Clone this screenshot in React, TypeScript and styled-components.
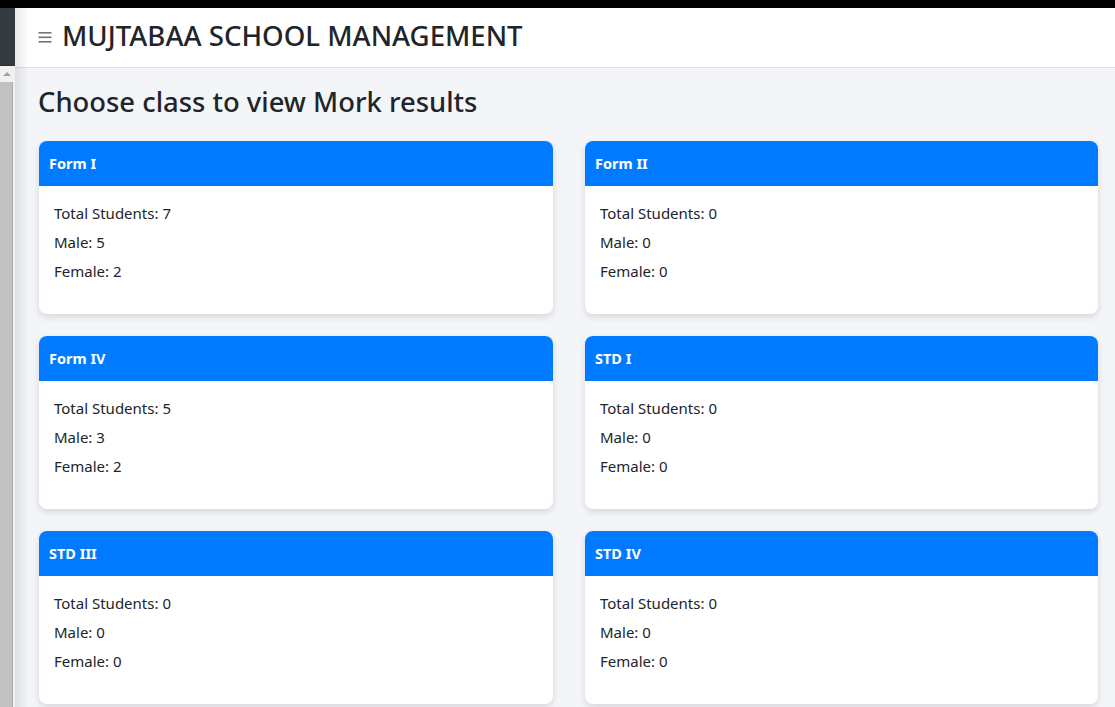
import React from "react";
import styled, { createGlobalStyle } from "styled-components";

const GlobalStyle = createGlobalStyle`
  * { box-sizing: border-box; }
  html, body { margin: 0; padding: 0; background: #000; }
  body { font-family: "Noto Sans", "Open Sans", sans-serif; color: #212529; overflow: hidden; }
`;

const Screen = styled.div`
  padding-top: 8px;
  background: #000;
  height: 707px;
`;

const Layout = styled.div`
  display: flex;
  height: 699px;
  background: #f4f5f9;
`;

const Strip = styled.div`
  width: 15px;
  flex: none;
  display: flex;
  flex-direction: column;
  background: #f1f1f1;
`;

const StripTop = styled.div`
  height: 58px;
  background: #343a40;
  border-bottom: 1px solid #2b3035;
`;

const ScrollArrow = styled.div`
  height: 16px;
  display: flex;
  align-items: center;
  justify-content: center;
  padding-right: 2px;
  &::before {
    content: "";
    border-left: 4px solid transparent;
    border-right: 4px solid transparent;
    border-bottom: 4px solid #a3a3a3;
  }
`;

const ScrollTrack = styled.div`
  flex: 1;
  margin-right: 2px;
  background: #c1c1c1;
  border-right: 1px solid #a9a9a9;
`;

const Main = styled.div`
  flex: 1;
  display: flex;
  flex-direction: column;
  position: relative;
  &::after {
    content: "";
    position: absolute;
    left: 0;
    top: 0;
    bottom: 0;
    width: 14px;
    background: linear-gradient(to right, rgba(0,0,0,0.09), rgba(0,0,0,0));
    pointer-events: none;
  }
`;

const Header = styled.header`
  height: 60px;
  flex: none;
  background: #fff;
  border-bottom: 1px solid #dee2e6;
  display: flex;
  align-items: center;
  padding: 0 0 5px 23px;
  gap: 9px;
`;

const Burger = styled.svg`
  width: 15px;
  height: 14px;
  margin-top: 3px;
`;

const Brand = styled.h1`
  margin: 0;
  font-size: 27.6px;
  font-weight: 500;
  color: #212529;
`;

const Content = styled.main`
  padding: 15px 17px 0 23px;
`;

const PageTitle = styled.h2`
  margin: 0 0 20px;
  font-size: 27.4px;
  font-weight: 500;
  line-height: 38px;
  color: #212529;
`;

const Grid = styled.div`
  display: grid;
  grid-template-columns: 514px 513px;
  column-gap: 32px;
  row-gap: 22px;
  padding-left: 1px;
`;

const Card = styled.section`
  height: 173px;
  background: #fff;
  border-radius: 8px;
  box-shadow: 0 3px 7px rgba(0, 0, 0, 0.12);
  overflow: hidden;
`;

const CardHead = styled.div`
  height: 45px;
  background: #007bff;
  color: #fff;
  font-weight: 700;
  font-size: 14.5px;
  display: flex;
  align-items: center;
  padding: 0 0 1px 10px;
`;

const CardBody = styled.div`
  padding: 16px 15px;
  display: flex;
  flex-direction: column;
  gap: 7px;
`;

const Stat = styled.p`
  margin: 0;
  font-size: 15px;
  line-height: 22px;
  color: #212529;
`;

const classes = [
  { name: "Form I", total: 7, male: 5, female: 2 },
  { name: "Form II", total: 0, male: 0, female: 0 },
  { name: "Form IV", total: 5, male: 3, female: 2 },
  { name: "STD I", total: 0, male: 0, female: 0 },
  { name: "STD III", total: 0, male: 0, female: 0 },
  { name: "STD IV", total: 0, male: 0, female: 0 },
];

export default function App() {
  return (
    <Screen>
      <GlobalStyle />
      <Layout>
        <Strip>
          <StripTop />
          <ScrollArrow />
          <ScrollTrack />
        </Strip>
        <Main>
          <Header>
            <Burger viewBox="0 0 15 14">
              <rect x="0.5" y="2" width="13" height="1.6" fill="#6c757d" />
              <rect x="0.5" y="6.5" width="13" height="1.6" fill="#6c757d" />
              <rect x="0.5" y="11" width="13" height="1.6" fill="#6c757d" />
            </Burger>
            <Brand>MUJTABAA SCHOOL MANAGEMENT</Brand>
          </Header>
          <Content>
            <PageTitle>Choose class to view Mork results</PageTitle>
            <Grid>
              {classes.map((c) => (
                <Card key={c.name}>
                  <CardHead>{c.name}</CardHead>
                  <CardBody>
                    <Stat>Total Students: {c.total}</Stat>
                    <Stat>Male: {c.male}</Stat>
                    <Stat>Female: {c.female}</Stat>
                  </CardBody>
                </Card>
              ))}
            </Grid>
          </Content>
        </Main>
      </Layout>
    </Screen>
  );
}
